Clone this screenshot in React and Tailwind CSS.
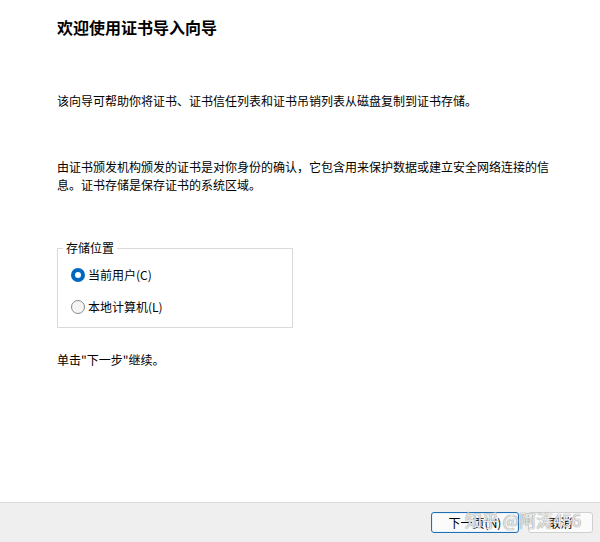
export default function App() {
  const font = { fontFamily: '"Noto Sans CJK SC", "Noto Sans", sans-serif' };

  return (
    <div
      className="relative flex h-[542px] w-[600px] flex-col bg-white text-[12px] text-black"
      style={font}
    >
      <div className="flex-1 pl-[57px]">
        <h1 className="mt-[16px] text-[16px] font-bold leading-[22px]">
          欢迎使用证书导入向导
        </h1>

        <p className="mt-[54px] leading-[18px]">
          该向导可帮助你将证书、证书信任列表和证书吊销列表从磁盘复制到证书存储。
        </p>

        <p className="mt-[48px] leading-[18px]">
          由证书颁发机构颁发的证书是对你身份的确认，它包含用来保护数据或建立安全网络连接的信
          <br />
          息。证书存储是保存证书的系统区域。
        </p>

        <fieldset className="mt-[45px] w-[236px] border border-[#dadada] px-0 pb-[11px]">
          <legend className="ml-[5px] px-[3px] leading-[18px]">存储位置</legend>
          <div className="flex flex-col gap-[14px] pl-[13px] pt-[9px]">
            <label className="flex h-[18px] items-center gap-[3px]">
              <span className="flex h-[14px] w-[14px] items-center justify-center rounded-full bg-[#0067c0]">
                <span className="h-[6px] w-[6px] rounded-full bg-white" />
              </span>
              <span className="leading-[18px]">当前用户(C)</span>
            </label>
            <label className="flex h-[18px] items-center gap-[3px]">
              <span className="h-[14px] w-[14px] rounded-full border border-[#8a8a8a] bg-[#f5f5f5]" />
              <span className="leading-[18px]">本地计算机(L)</span>
            </label>
          </div>
        </fieldset>

        <p className="mt-[23px] leading-[18px]">单击"下一步"继续。</p>
      </div>

      <div className="flex h-[40px] items-center justify-end gap-[9px] border-t border-[#dcdcdc] bg-[#efefef] pr-[7px]">
        <button className="h-[21px] w-[88px] rounded-[3px] border border-[#1f6fb5] bg-[#fbfbfb] text-[12px] leading-[19px] shadow-[inset_0_0_0_1px_#e8f1fa]">
          下一页(N)
        </button>
        <button className="h-[21px] w-[65px] rounded-[3px] border border-[#d0d0d0] bg-[#fbfbfb] text-[12px] leading-[19px]">
          取消
        </button>
      </div>

      <div className="pointer-events-none absolute left-[465px] top-[508px] text-[17px] leading-[24px] text-[#ffffff]/80 [text-shadow:0_0_1px_#8a8a8a,0_0_1px_#8a8a8a]">
        知乎 @阿涛456
      </div>
    </div>
  );
}
